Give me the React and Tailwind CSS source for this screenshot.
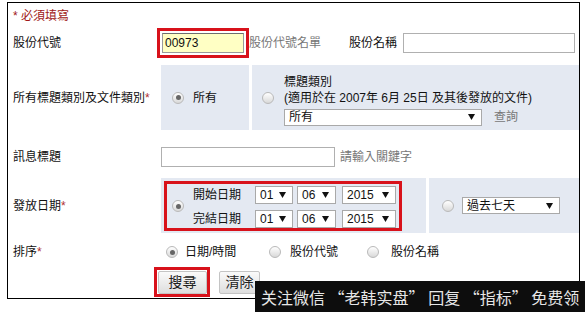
import React from 'react';

const FONT = { fontFamily: '"Liberation Sans", "Noto Sans CJK TC", sans-serif' };

const Radio = ({ checked }) => (
  <span className="inline-flex h-[12px] w-[12px] shrink-0 items-center justify-center rounded-full border border-[#b9b9b9] bg-gradient-to-b from-[#ffffff] to-[#d9d9d9]">
    {checked && <span className="h-[5px] w-[5px] rounded-full bg-[#666]" />}
  </span>
);

const Arrow = () => (
  <svg width="7" height="6" viewBox="0 0 7 6" className="shrink-0">
    <path d="M0 0 L7 0 L3.5 6 Z" fill="#111" />
  </svg>
);

const Select = ({ value, className }) => (
  <div className={`flex items-center justify-between border border-[#a9a9a9] bg-white pl-[4px] pr-[6px] text-[12px] leading-none text-[#111] ${className}`}>
    <span>{value}</span>
    <Arrow />
  </div>
);

const Label = ({ children, star, className = 'w-[153px]' }) => (
  <div className={`shrink-0 pl-[5px] text-[12px] text-[#111] ${className}`}>
    {children}
    {star && <span className="text-[#b03030]">*</span>}
  </div>
);

const App = () => {
  return (
    <div className="relative h-[312px] w-[585px] overflow-hidden bg-white pl-[7px] pt-[2px]" style={FONT}>
      <div className="flex h-[297px] w-[573px] flex-col border border-black">
        {/* required note */}
        <div className="mt-[5px] pl-[5px] text-[12px] leading-[16px] text-[#a01818]">* 必須填寫</div>

        {/* stock code */}
        <div className="mt-[4px] flex h-[30px] items-center">
          <Label className="w-[149px]">股份代號</Label>
          <div className="border-[3px] border-[#d8121b] p-[2px]">
            <div className="flex h-[20px] w-[82px] items-center border border-[#9a9a9a] border-t-[#6e6e6e] bg-[#ffffc4] pl-[2px] text-[12px] text-[#111]">00973</div>
          </div>
          <span className="text-[12px] text-[#777]">股份代號名單</span>
          <span className="ml-[28px] text-[12px] text-[#111]">股份名稱</span>
          <div className="ml-[6px] h-[20px] w-[172px] border border-[#b0b0b0] bg-white" />
        </div>

        {/* category */}
        <div className="mt-[7px] flex h-[65px] items-center">
          <Label star>所有標題類別及文件類別</Label>
          <div className="flex h-full w-[88px] items-center bg-[#e4e9f2] pl-[11px]">
            <Radio checked />
            <span className="ml-[9px] text-[12px] text-[#111]">所有</span>
          </div>
          <div className="ml-[3px] flex h-full flex-1 items-center bg-[#e4e9f2] pl-[10px]">
            <Radio />
            <div className="ml-[10px] flex flex-col pt-[4px] text-[12px] leading-[16px] text-[#111]">
              <span>標題類別</span>
              <span>(適用於在 2007年 6月 25日 及其後發放的文件)</span>
              <div className="mt-[3px] flex items-center">
                <Select value="所有" className="h-[17px] w-[198px]" />
                <span className="ml-[12px] text-[#777]">查詢</span>
              </div>
            </div>
          </div>
        </div>

        {/* headline */}
        <div className="mt-[17px] flex h-[20px] items-center">
          <Label>訊息標題</Label>
          <div className="h-[20px] w-[174px] border border-[#b0b0b0] bg-white" />
          <span className="ml-[5px] text-[12px] text-[#777]">請輸入關鍵字</span>
        </div>

        {/* release date */}
        <div className="mt-[11px] flex h-[55px] items-center">
          <Label star>發放日期</Label>
          <div className="h-full w-[265px] bg-[#e4e9f2] pl-[3px] pt-[3px]">
            <div className="flex h-[50px] w-[238px] items-center border-[3px] border-[#d8121b] pl-[5px]">
              <Radio checked />
              <div className="ml-[9px] flex flex-col gap-[6px] pt-[1px]">
                {['開始日期', '完結日期'].map((t) => (
                  <div key={t} className="flex h-[18px] items-center">
                    <span className="w-[62px] text-[12px] text-[#111]">{t}</span>
                    <Select value="01" className="h-[18px] w-[38px]" />
                    <Select value="06" className="ml-[4px] h-[18px] w-[39px]" />
                    <Select value="2015" className="ml-[6px] h-[18px] w-[54px]" />
                  </div>
                ))}
              </div>
            </div>
          </div>
          <div className="ml-[3px] flex h-full flex-1 items-center bg-[#e4e9f2] pl-[13px]">
            <Radio />
            <Select value="過去七天" className="ml-[8px] h-[17px] w-[98px]" />
          </div>
        </div>

        {/* sort */}
        <div className="mt-[11px] flex h-[16px] items-center text-[12px] text-[#111]">
          <Label star>排序</Label>
          <div className="ml-[5px] flex w-[103px] items-center">
            <Radio checked />
            <span className="ml-[7px]">日期/時間</span>
          </div>
          <div className="flex w-[98px] items-center">
            <Radio />
            <span className="ml-[9px]">股份代號</span>
          </div>
          <div className="flex items-center">
            <Radio />
            <span className="ml-[12px]">股份名稱</span>
          </div>
        </div>

        {/* buttons */}
        <div className="mt-[7px] flex h-[30px] items-start pl-[146px]">
          <div className="h-[30px] w-[56px] border-[3px] border-[#d8121b] pl-[1px] pt-[1px]">
            <button className="flex h-[23px] w-[49px] items-center justify-center rounded-[2px] border border-[#c4c4c4] bg-gradient-to-b from-[#fafafa] to-[#dedede] text-[14px] text-[#222]">搜尋</button>
          </div>
          <button className="ml-[9px] mt-[4px] flex h-[23px] w-[41px] items-center justify-center rounded-[2px] border border-[#c4c4c4] bg-gradient-to-b from-[#fafafa] to-[#dedede] text-[14px] text-[#222]">清除</button>
        </div>
      </div>

      {/* watermark banner */}
      <div
        className="absolute left-[255px] top-[281px] flex h-[31px] w-[330px] items-center whitespace-nowrap bg-[#0d0d0d] pl-[6px] text-[16px] text-[#e6e6e6]"
        style={{ fontFamily: '"Noto Sans CJK SC", sans-serif' }}
      >
        关注微信 “老韩实盘” 回复 “指标” 免费领
      </div>
    </div>
  );
};

export default App;
